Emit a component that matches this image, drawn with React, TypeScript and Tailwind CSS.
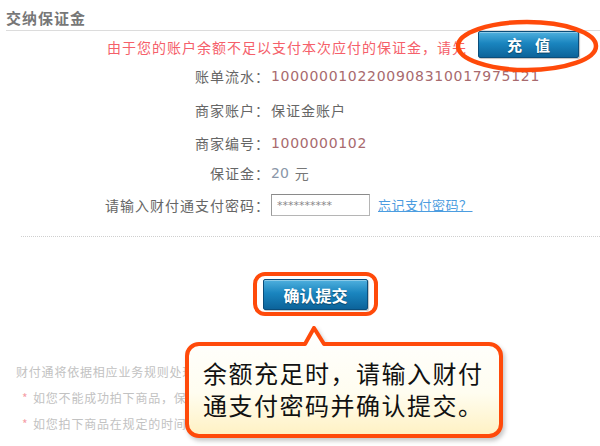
import React from "react";

function Row({ h, label, children }: { h: string; label: string; children: React.ReactNode }) {
  return (
    <div className={`flex items-center ${h}`}>
      <div className="w-[270px] shrink-0 text-right tracking-[1px] text-[#666]">{label}</div>
      <div className="flex items-center pl-[1px]">{children}</div>
    </div>
  );
}

export default function App() {
  return (
    <div className="relative w-[600px] h-[446px] overflow-hidden bg-white font-['Noto_Sans_CJK_SC','Noto_Sans',sans-serif] text-[14px] leading-[20px] text-[#666]">
      {/* title */}
      <div className="ml-[6px] h-[31px] border-b border-[#dcdcdc] pt-[8px] text-[15px] leading-[20px] font-bold tracking-[1px] text-[#777]">
        交纳保证金
      </div>

      {/* warning row */}
      <div className="flex h-[27px] items-center justify-end gap-[11px] pr-[21px]">
        <span className="mt-[5px] tracking-[1px] text-[#f5606a]">由于您的账户余额不足以支付本次应付的保证金，请先</span>
        <div className="relative">
          <button className="flex h-[27px] w-[101px] items-center justify-center gap-[13px] rounded-[2px] border border-[#0b4d7a] bg-[linear-gradient(to_bottom,#4fb0de,#1a85bf_45%,#0c639a_100%)] text-[15px] font-bold text-white shadow-[1px_1px_1px_rgba(0,0,0,0.25),inset_0_1px_0_rgba(255,255,255,0.35)] [text-shadow:0_1px_1px_rgba(0,0,0,0.4)]">
            <span>充</span>
            <span>值</span>
          </button>
          <svg className="pointer-events-none absolute left-[-23px] top-[-12px]" width="146" height="56" viewBox="0 0 146 56">
            <ellipse cx="72" cy="27" rx="69" ry="24" fill="none" stroke="#ff4a0a" strokeWidth="4.5" />
          </svg>
        </div>
      </div>

      {/* form rows */}
      <div className="mt-[2px]">
        <Row h="h-[32px]" label="账单流水：">
          <span className="font-['DejaVu_Sans',sans-serif] text-[14px] tracking-[0.7px] text-[#a86a6e]">1000000102200908310017975121</span>
        </Row>
        <Row h="h-[36px]" label="商家账户：">
          <span className="tracking-[1px] text-[#666]">保证金账户</span>
        </Row>
        <Row h="h-[30px]" label="商家编号：">
          <span className="font-['DejaVu_Sans',sans-serif] text-[14px] tracking-[0.7px] text-[#a86a6e]">1000000102</span>
        </Row>
        <Row h="h-[30px]" label="保证金：">
          <span className="font-['DejaVu_Sans',sans-serif] text-[14px] text-[#8a96a8]">20</span>
          <span className="ml-[6px] text-[#777]">元</span>
        </Row>
        <Row h="h-[34px]" label="请输入财付通支付密码：">
          <input
            readOnly
            value="**********"
            className="h-[22px] w-[99px] border border-[#b5b5b5] border-t-[#8a8a8a] border-l-[#9a9a9a] bg-white pl-[5px] font-['DejaVu_Sans',sans-serif] text-[11px] text-[#888] outline-none"
          />
          <a href="#" className="ml-[8px] text-[13px] tracking-[0.5px] text-[#4c9de0] underline">忘记支付密码？</a>
        </Row>
      </div>

      {/* dotted separator */}
      <div className="ml-[21px] mt-[14px] border-t border-dotted border-[#cfcfcf]" />

      {/* confirm */}
      <div className="ml-[253px] mt-[35px] flex w-fit rounded-[12px] border-[4px] border-[#ff4a0a] pb-[2px] pl-[6px] pr-[6px] pt-[3px]">
        <button className="flex h-[31px] w-[105px] items-center justify-center rounded-[2px] border border-[#0b4d7a] bg-[linear-gradient(to_bottom,#4fb0de,#1a85bf_45%,#0c639a_100%)] text-[16px] font-bold text-white shadow-[1px_1px_1px_rgba(0,0,0,0.25),inset_0_1px_0_rgba(255,255,255,0.35)] [text-shadow:0_1px_1px_rgba(0,0,0,0.4)]">
          确认提交
        </button>
      </div>

      {/* faded notes (continue beneath the callout) */}
      <div className="mt-[43px] w-[186px] overflow-hidden whitespace-nowrap text-[12px] tracking-[0.8px] text-[#c2c2c2]">
        <div className="h-[26px] pl-[16px] leading-[26px]">财付通将依据相应业务规则处理保证金</div>
        <div className="flex h-[26px] items-center pl-[22px] leading-[26px]">
          <span className="w-[11px] shrink-0 text-[#f5a0a8]">*</span>
          <span>如您不能成功拍下商品，保证金将退还</span>
        </div>
        <div className="flex h-[26px] items-center pl-[22px] leading-[26px]">
          <span className="w-[11px] shrink-0 text-[#f5a0a8]">*</span>
          <span>如您拍下商品在规定的时间内未付款</span>
        </div>
      </div>

      {/* callout bubble */}
      <div className="absolute left-[180px] top-[322px] h-[124px] w-[330px]">
        <svg className="absolute inset-0 drop-shadow-[2px_3px_2px_rgba(0,0,0,0.22)]" width="330" height="124" viewBox="0 0 330 124">
          <defs>
            <linearGradient id="bub" x1="0" y1="0" x2="0" y2="1">
              <stop offset="0" stopColor="#ffffff" />
              <stop offset="0.6" stopColor="#fffdf0" />
              <stop offset="1" stopColor="#fff1c2" />
            </linearGradient>
          </defs>
          <path
            d="M19 22 H125 L134 6 L144 22 H309 A12 12 0 0 1 321 34 V102 A12 12 0 0 1 309 114 H19 A12 12 0 0 1 7 102 V34 A12 12 0 0 1 19 22 Z"
            fill="url(#bub)"
            stroke="#ff4a0a"
            strokeWidth="4"
            strokeLinejoin="round"
          />
        </svg>
        <div className="absolute left-[23px] top-[35px] text-[24px] leading-[32px] tracking-[1.5px] text-[#111]">
          <div>余额充足时，请输入财付</div>
          <div>通支付密码并确认提交。</div>
        </div>
      </div>
    </div>
  );
}
